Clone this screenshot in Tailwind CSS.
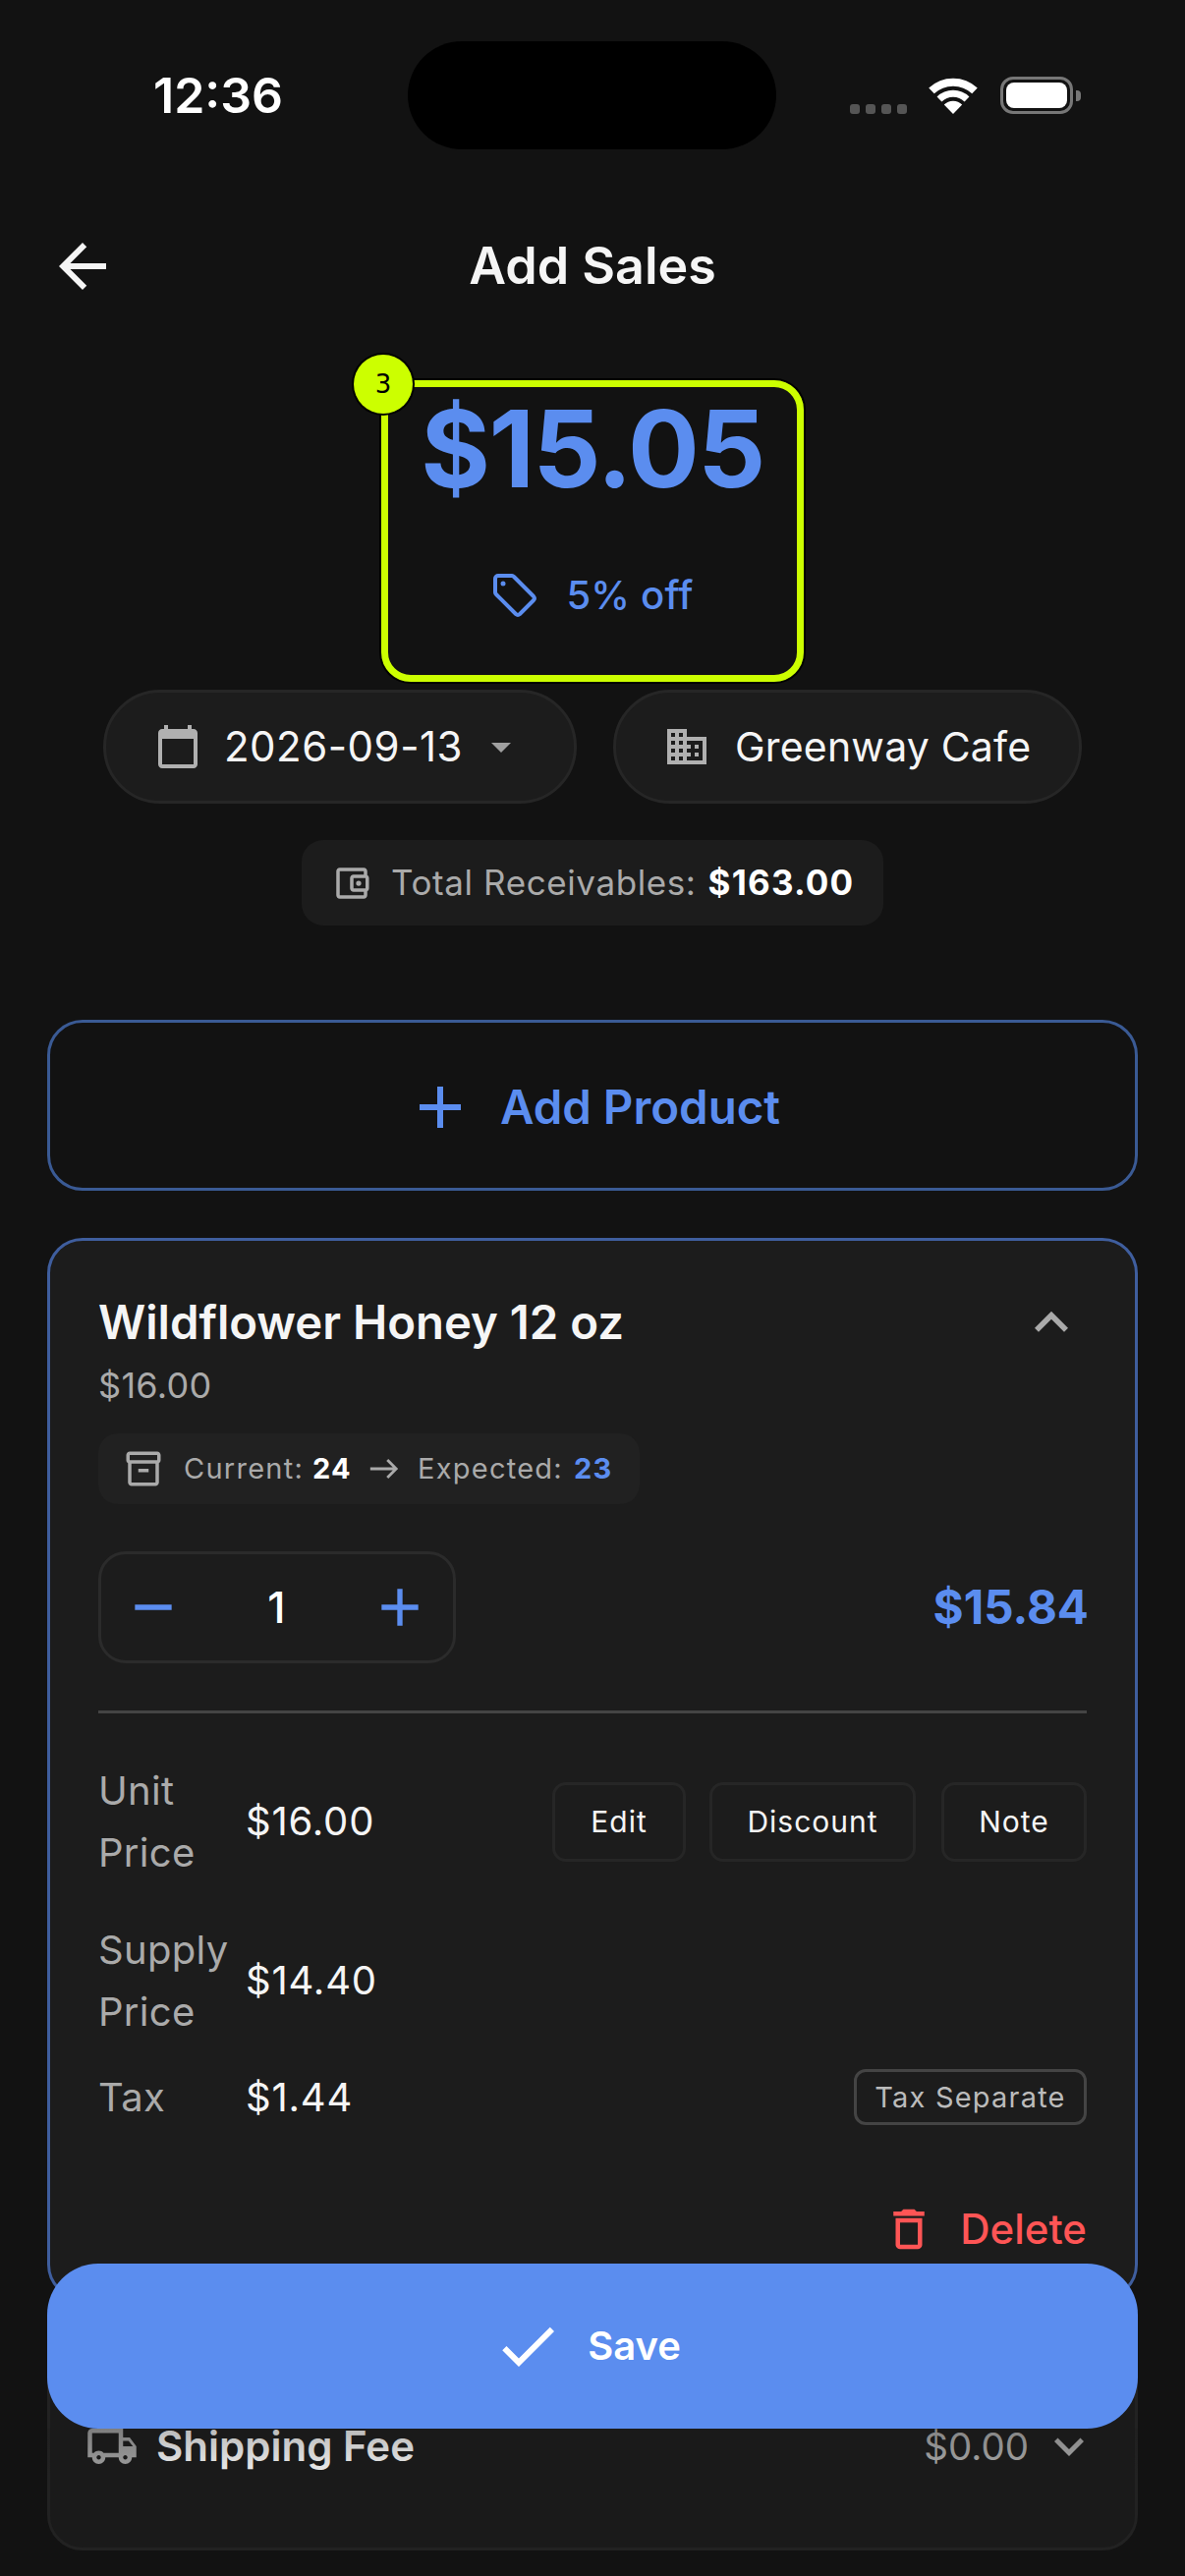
<!DOCTYPE html>
<html lang="en">

<head>
  <meta charset="UTF-8" />
  <meta name="viewport" content="width=device-width, initial-scale=1.0" />
  <title>Add Sales</title>
  <script src="https://cdn.jsdelivr.net/npm/@tailwindcss/browser@4"></script>
</head>

<body class="bg-[#121212]">
  <div class="relative w-[1206px] h-[2622px] overflow-hidden bg-[#121212] font-['Inter',sans-serif] text-[#f5f5f5]">

    <!-- status bar -->
    <div class="flex items-center h-[110px] mt-[42px] pl-[156px]">
      <span class="w-[259px] text-[50px] font-semibold leading-none text-white">12:36</span>
      <div class="w-[375px] h-[110px] rounded-[55px] bg-black"></div>
      <div class="flex items-end ml-[75px]">
        <div class="flex gap-[6px]">
          <span class="w-[10px] h-[10px] rounded-[3px] bg-[#555]"></span>
          <span class="w-[10px] h-[10px] rounded-[3px] bg-[#555]"></span>
          <span class="w-[10px] h-[10px] rounded-[3px] bg-[#555]"></span>
          <span class="w-[10px] h-[10px] rounded-[3px] bg-[#555]"></span>
        </div>
        <svg class="ml-[22px]" width="50" height="38" viewBox="0 0 50 38" fill="none">
          <path d="M3 14.4A32 32 0 0 1 47 14.4" stroke="#fff" stroke-width="8" />
          <path d="M11 23A20 20 0 0 1 39 23" stroke="#fff" stroke-width="7" />
          <path d="M25 38L15.8 28.5A13 13 0 0 1 34.2 28.5Z" fill="#fff" />
        </svg>
        <div class="ml-[23px] w-[74px] h-[38px] p-[3px] rounded-[13px] border-[3px] border-[#777]">
          <div class="w-full h-full rounded-[8px] bg-white"></div>
        </div>
        <div class="ml-[3px] mb-[13px] w-[5px] h-[11px] rounded-r-[4px] bg-[#777]"></div>
      </div>
    </div>

    <!-- header -->
    <div class="relative flex items-center justify-center h-[150px] mt-[44px]">
      <svg class="absolute left-[48px] top-[39px]" width="72" height="72" viewBox="0 0 24 24" fill="#f5f5f5">
        <path d="M20 11H7.83l5.59-5.59L12 4l-8 8 8 8 1.41-1.41L7.83 13H20v-2z" />
      </svg>
      <h1 class="text-[52px] font-semibold leading-none">Add Sales</h1>
    </div>

    <!-- total -->
    <div class="relative w-[430px] h-[307px] mx-auto mt-[41px] flex flex-col items-center rounded-[30px] border-[7px] border-[#ccff00] shadow-[0_0_0_2px_#000]">
      <span class="absolute -left-[35px] -top-[33px] flex items-center justify-center w-[60px] h-[60px] rounded-full bg-[#ccff00] shadow-[0_0_0_2px_#000] font-['DejaVu_Sans',sans-serif] text-[26px] text-black">3</span>
      <div class="mt-[3px] text-[108px] font-bold leading-[120px] tracking-[-1.5px] text-[#5b8def]">$15.05</div>
      <div class="flex items-center gap-[30px] mt-[64px] h-[50px] pl-[2px] text-[40px] font-medium tracking-[0.2px] text-[#5b8def]">
        <svg width="44" height="44" viewBox="0 0 44 44" fill="none" stroke="#5b8def" stroke-width="4" stroke-linejoin="round">
          <path d="M5 2h14a3 3 0 0 1 2 1l20 20a3 3 0 0 1 0 4L27 41a3 3 0 0 1-4 0L3 21a3 3 0 0 1-1-2V5a3 3 0 0 1 3-3z" />
          <circle cx="10" cy="10" r="2.5" fill="#5b8def" stroke="none" />
        </svg>
        <span>5% off</span>
      </div>
    </div>

    <!-- date and customer -->
    <div class="flex justify-center gap-[37px] mt-[8px]">
      <div class="flex items-center w-[482px] h-[116px] pl-[49px] rounded-[58px] border-[3px] border-[#262626] bg-[#1c1c1c]">
        <svg width="48" height="48" viewBox="0 0 24 24" fill="#b0b0b0">
          <path d="M20 3h-1V1h-2v2H7V1H5v2H4c-1.100 0-2 .9-2 2v16c0 1.100.9 2 2 2h16c1.100 0 2-.9 2-2V5c0-1.100-.9-2-2-2zm0 18H4V8h16v13z" />
        </svg>
        <span class="ml-[23px] text-[42px] leading-none tracking-[0.5px]">2026-09-13</span>
        <svg class="ml-[15px]" width="48" height="48" viewBox="0 0 24 24" fill="#a0a0a0">
          <path d="M7 10l5 5 5-5z" />
        </svg>
      </div>
      <div class="flex items-center w-[477px] h-[116px] pl-[48px] rounded-[58px] border-[3px] border-[#262626] bg-[#1c1c1c]">
        <svg width="48" height="48" viewBox="0 0 24 24" fill="#b0b0b0">
          <path d="M12 7V3H2v18h20V7H12zM6 19H4v-2h2v2zm0-4H4v-2h2v2zm0-4H4V9h2v2zm0-4H4V5h2v2zm4 12H8v-2h2v2zm0-4H8v-2h2v2zm0-4H8V9h2v2zm0-4H8V5h2v2zm10 12h-8v-2h2v-2h-2v-2h2v-2h-2V9h8v10zm-2-8h-2v2h2v-2zm0 4h-2v2h2v-2z" />
        </svg>
        <span class="ml-[25px] text-[41px] leading-none tracking-[0.2px]">Greenway Cafe</span>
      </div>
    </div>

    <!-- receivables -->
    <div class="flex items-center w-[592px] h-[87px] mx-auto mt-[37px] pl-[30px] rounded-[22px] bg-[#1c1c1c]">
      <svg width="42" height="42" viewBox="0 0 24 24" fill="#aaa">
        <path d="M21 7.280V5c0-1.100-.9-2-2-2H5c-1.110 0-2 .9-2 2v14c0 1.100.89 2 2 2h14c1.100 0 2-.9 2-2v-2.280c.59-.35 1-.98 1-1.720V9c0-.74-.41-1.370-1-1.720zM20 9v6h-7V9h7zM5 19V5h14v2h-6c-1.100 0-2 .9-2 2v6c0 1.100.9 2 2 2h6v2H5z" />
        <circle cx="16" cy="12" r="1.500" />
      </svg>
      <span class="ml-[19px] text-[35px] leading-none tracking-[0.6px] text-[#aaa]">Total Receivables:</span>
      <span class="ml-[12px] text-[35px] font-bold leading-none tracking-[1.2px] text-white">$163.00</span>
    </div>

    <!-- add product -->
    <div class="flex items-center justify-center w-[1110px] h-[174px] mx-auto mt-[96px] pt-[3px] rounded-[36px] border-[3px] border-[#3a5a94] text-[#5b8def]">
      <svg width="72" height="72" viewBox="0 0 24 24" fill="#5b8def">
        <path d="M19 13h-6v6h-2v-6H5v-2h6V5h2v6h6v2z" />
      </svg>
      <span class="ml-[25px] text-[47.4px] font-semibold leading-none">Add Product</span>
    </div>

    <!-- product card -->
    <div class="w-[1110px] mx-auto mt-[48px] px-[49px] pt-[54px] pb-[42px] rounded-[36px] border-[3px] border-[#3f5e9e] bg-[#1c1c1c]">
      <div class="flex items-center justify-between h-[58px]">
        <h2 class="text-[47.3px] font-semibold leading-[58px]">Wildflower Honey 12 oz</h2>
        <svg class="mr-[2px]" width="68" height="68" viewBox="0 0 24 24" fill="#aaa">
          <path d="M12 8l-6 6 1.410 1.410L12 10.830l4.590 4.580L18 14z" />
        </svg>
      </div>
      <p class="mt-[13px] text-[36px] leading-[44px] tracking-[0.3px] text-[#aaa]">$16.00</p>

      <div class="flex items-center w-[551px] h-[72px] mt-[27px] pl-[25px] rounded-[20px] bg-[#212121] text-[29px] tracking-[1.25px] text-[#aaa]">
        <svg width="42" height="42" viewBox="0 0 24 24" fill="#aaa">
          <path d="M20 2H4c-1 0-2 .9-2 2v3.010c0 .72.43 1.340 1 1.690V20c0 1.100 1.100 2 2 2h14c.9 0 2-.9 2-2V8.700c.57-.35 1-.97 1-1.690V4c0-1.100-1-2-2-2zm-1 18H5V9h14v11zm1-13H4V4h16v3zM9 12h6v2H9z" />
        </svg>
        <span class="ml-[20px]">Current:</span>
        <span class="ml-[9px] font-bold text-white">24</span>
        <svg class="ml-[16px]" width="34" height="34" viewBox="0 0 24 24" fill="#aaa">
          <path d="M15 5l-1.410 1.410L18.170 11H2v2h16.170l-4.580 4.590L15 19l7-7-7-7z" />
        </svg>
        <span class="ml-[17px]">Expected:</span>
        <span class="ml-[11px] font-bold text-[#5b8def]">23</span>
      </div>

      <div class="flex items-center justify-between mt-[48px]">
        <div class="flex items-center justify-between w-[364px] h-[114px] pl-[21px] pr-[22px] rounded-[28px] border-[3px] border-[#2b2b2b]">
          <svg width="64" height="64" viewBox="0 0 24 24" fill="#5b8def">
            <path d="M19 13H5v-2h14v2z" />
          </svg>
          <span class="text-[44px] font-medium leading-none text-white">1</span>
          <svg width="64" height="64" viewBox="0 0 24 24" fill="#5b8def">
            <path d="M19 13h-6v6h-2v-6H5v-2h6V5h2v6h6v2z" />
          </svg>
        </div>
        <span class="mr-[-2px] text-[47.5px] font-bold leading-none text-[#5b8def]">$15.84</span>
      </div>

      <div class="h-[3px] mt-[48px] bg-[#444]"></div>

      <!-- price rows -->
      <div class="flex items-center mt-[47px]">
        <span class="w-[150px] text-[40px] leading-[63px] tracking-[0.3px] text-[#aaa]">Unit<br />Price</span>
        <span class="text-[40px] leading-none tracking-[0.8px]">$16.00</span>
        <div class="flex items-center ml-auto text-[30px] tracking-[1px]">
          <span class="flex items-center justify-center w-[136px] h-[81px] rounded-[14px] border-[3px] border-[#262626]">Edit</span>
          <span class="flex items-center justify-center w-[210px] h-[81px] ml-[24px] rounded-[14px] border-[3px] border-[#262626]">Discount</span>
          <span class="flex items-center justify-center w-[148px] h-[81px] ml-[26px] rounded-[14px] border-[3px] border-[#262626]">Note</span>
        </div>
      </div>
      <div class="flex items-center mt-[36px]">
        <span class="w-[150px] text-[40px] leading-[63px] tracking-[0.3px] text-[#aaa]">Supply<br />Price</span>
        <span class="text-[40px] leading-none tracking-[0.8px]">$14.40</span>
      </div>
      <div class="flex items-center mt-[24px]">
        <span class="w-[150px] text-[40px] leading-[63px] tracking-[0.3px] text-[#aaa]">Tax</span>
        <span class="text-[40px] leading-none tracking-[0.8px]">$1.44</span>
        <span class="flex items-center justify-center w-[237px] h-[57px] ml-auto rounded-[12px] border-[3px] border-[#444] text-[29px] tracking-[1.2px] text-[#bbb]">Tax Separate</span>
      </div>

      <div class="flex items-center justify-end h-[54px] mt-[76px] text-[#ff5555]">
        <svg width="54" height="54" viewBox="0 0 24 24" fill="#ff5555">
          <path d="M16 9v10H8V9h8m-1.500-6h-5l-1 1H5v2h14V4h-3.500l-1-1zM18 7H6v12c0 1.100.9 2 2 2h8c1.100 0 2-.9 2-2V7z" />
        </svg>
        <span class="ml-[25px] text-[42px] font-medium leading-none">Delete</span>
      </div>
    </div>

    <!-- shipping card -->
    <div class="w-[1110px] h-[229px] mx-auto mt-[26px] pl-[36px] pr-[50px] pt-[93px] rounded-[36px] border-[3px] border-[#222] bg-[#1a1a1a]">
      <div class="flex items-center h-[54px]">
        <svg width="54" height="54" viewBox="0 0 24 24" fill="#a0a0a0">
          <path d="M20 8h-3V4H3c-1.100 0-2 .9-2 2v11h2c0 1.660 1.340 3 3 3s3-1.340 3-3h6c0 1.660 1.340 3 3 3s3-1.340 3-3h2v-5l-3-4zm-.5 1.500 1.960 2.500H17V9.500h2.500zM6 18c-.55 0-1-.45-1-1s.45-1 1-1 1 .45 1 1-.45 1-1 1zm2.220-3c-.55-.61-1.330-1-2.220-1s-1.670.39-2.220 1H3V6h12v9H8.220zM18 18c-.55 0-1-.45-1-1s.45-1 1-1 1 .45 1 1-.45 1-1 1z" />
        </svg>
        <span class="ml-[18px] text-[42px] font-semibold leading-none text-[#f0f0f0]">Shipping Fee</span>
        <span class="ml-auto text-[38.5px] leading-none text-[#a8a8a8]">$0.00</span>
        <svg class="ml-[11px] mr-[-13px]" width="60" height="60" viewBox="0 0 24 24" fill="#a8a8a8">
          <path d="M16.590 8.590L12 13.170 7.410 8.590 6 10l6 6 6-6z" />
        </svg>
      </div>
    </div>

    <!-- fade under the save button -->
    <div class="absolute left-[48px] top-[2472px] w-[1110px] h-[50px] bg-gradient-to-b from-[#1a1a1a40] to-transparent"></div>

    <!-- save -->
    <div class="absolute left-[48px] top-[2304px] flex items-center justify-center w-[1110px] h-[168px] pr-[12px] rounded-[52px] bg-[#5b8def] text-white">
      <svg width="72" height="72" viewBox="0 0 24 24" fill="#fff">
        <path d="M9 16.170L4.830 12l-1.420 1.410L9 19 21 7l-1.410-1.410z" />
      </svg>
      <span class="ml-[25px] text-[40px] font-semibold leading-none">Save</span>
    </div>
  </div>
</body>

</html>
